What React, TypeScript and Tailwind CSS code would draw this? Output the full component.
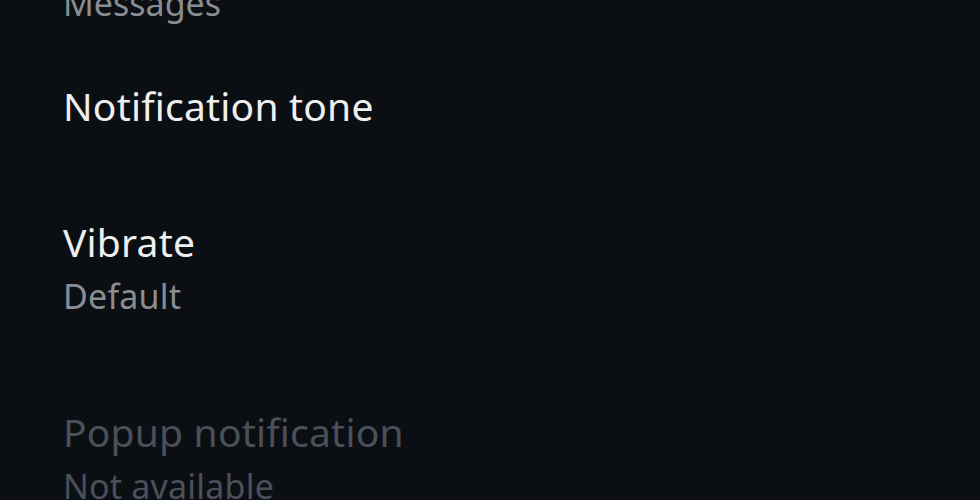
import React from 'react';

type Row = { title: string; summary?: string; disabled?: boolean };

const rows: Row[] = [
  { title: 'Notification tone' },
  { title: 'Vibrate', summary: 'Default' },
  { title: 'Popup notification', summary: 'Not available', disabled: true },
];

const App: React.FC = () => {
  return (
    <div
      className="w-[980px] h-[500px] overflow-hidden bg-[#0b0f14]"
      style={{ fontFamily: '"Noto Sans", "DejaVu Sans", sans-serif' }}
    >
      <div className="px-[63px] -mt-[24px]">
        {/* tail of the previous row */}
        <div className="pb-[8px] text-[34px] leading-[54px] text-[#8a8d91]">Messages</div>

        {rows.map((row) => (
          <div key={row.title} className="py-[41px] flex flex-col">
            <div
              className={
                'text-[39px] leading-[54px] tracking-[0.2px] ' +
                (row.disabled ? 'text-[#4b5058]' : 'text-[#efefef]')
              }
            >
              {row.title}
            </div>
            {row.summary && (
              <div
                className={
                  'text-[34px] leading-[54px] tracking-[0.2px] ' +
                  (row.disabled ? 'text-[#4b5058]' : 'text-[#8a8d91]')
                }
              >
                {row.summary}
              </div>
            )}
          </div>
        ))}
      </div>
    </div>
  );
};

export default App;
